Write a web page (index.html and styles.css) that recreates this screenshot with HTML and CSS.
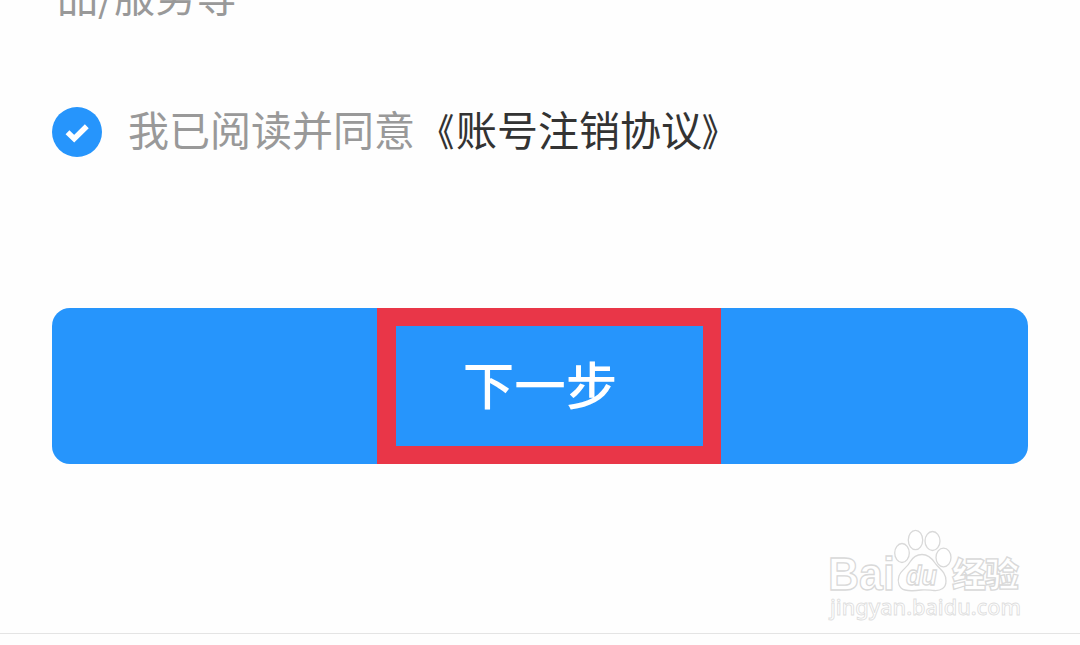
FILE: index.html
```
<!DOCTYPE html>
<html lang="zh-CN">
<head>
  <meta charset="UTF-8" />
  <meta name="viewport" content="width=device-width, initial-scale=1.0"/>
  <title>账号注销</title>
  <link rel="stylesheet" href="styles.css">
</head>
<body>
  <main class="page">
    <p class="terms">品/服务等</p>

    <div class="agree">
      <svg class="check" viewBox="0 0 50 50">
        <circle cx="25" cy="25" r="25"/>
        <path d="M15.500 25.200 L22.200 31.700 L34.800 19.200"/>
      </svg>
      <p class="agree-text">我已阅读并同意<a class="link"><span class="open">《</span>账号注销协议<span class="close">》</span></a></p>
    </div>

    <button class="next" type="button">下一步<span class="highlight"></span></button>

    <footer class="footer">
      <svg class="watermark" viewBox="0 0 220 110">
        <g class="outline">
          <text class="latin" x="13" y="69.500" textLength="67" lengthAdjust="spacingAndGlyphs">Bai</text>
          <ellipse cx="87" cy="33" rx="7.3" ry="9.5"/>
          <ellipse cx="100.500" cy="20" rx="7.2" ry="9.7"/>
          <ellipse cx="117.500" cy="21" rx="7.5" ry="9.5"/>
          <ellipse cx="128.500" cy="37.500" rx="7.5" ry="9.3"/>
          <path d="M107 34.500 C113 34.500 117 38.500 120 43 C123 48 131 51 131 61 C131 68 126 71 119 70.500 C113 70 110 69.500 106 70 C99 71 94 71 90 70 C84 68.500 82 62 84 56 C86 50 92 48 95 42 C98 37 102 34.500 107 34.500Z"/>
          <text class="du" x="91" y="65" textLength="31" lengthAdjust="spacingAndGlyphs">du</text>
          <text class="cjk" x="137" y="67" textLength="67">经验</text>
          <text class="domain" x="15" y="95" textLength="191" lengthAdjust="spacingAndGlyphs">jingyan.baidu.com</text>
        </g>
      </svg>
    </footer>
  </main>
</body>
</html>
```

FILE: styles.css
```
body {
  margin: 0;
  background: #fefefe;
  font-family: "Noto Sans CJK SC", sans-serif;
  color: #333;
}
.page {
  display: flex;
  flex-direction: column;
  height: 645px;
  overflow: hidden;
}
p {
  margin: 0;
}
.terms {
  height: 143px;
  margin-top: -36px;
  margin-left: 57px;
  font-size: 41px;
  line-height: 60px;
  color: #999;
}
.agree {
  display: flex;
  align-items: center;
  height: 50px;
  padding: 0 52px;
  gap: 26px;
}
.check {
  width: 50px;
  height: 50px;
  fill: #2695fc;
}
.check path {
  fill: none;
  stroke: #fff;
  stroke-width: 5.5;
}
.agree-text {
  padding-bottom: 6px;
  font-size: 41px;
  line-height: 50px;
  white-space: nowrap;
  color: #999;
}
.link {
  color: #333;
}
.open, .close {
  display: inline-block;
  font-size: 38px;
  font-weight: 500;
}
.open {
  margin-left: 1px;
  margin-right: 2px;
  transform: scaleX(0.85);
  transform-origin: right;
}
.close {
  transform: scaleX(0.85);
  transform-origin: left;
}
.next {
  position: relative;
  flex: none;
  height: 156px;
  margin: 151px 52px 0;
  padding: 0 0 8px 0;
  border: none;
  border-radius: 18px;
  background: #2695fc;
  color: #fff;
  font-family: inherit;
  font-size: 51.5px;
  font-weight: 500;
}
.highlight {
  position: absolute;
  top: 0;
  left: 325px;
  box-sizing: border-box;
  width: 344px;
  height: 156px;
  border: 18px solid #e93648;
  border-left-width: 19px;
}
.footer {
  display: flex;
  justify-content: flex-end;
  height: 113px;
  margin-top: 56px;
  padding-right: 45px;
  border-bottom: 1px solid #e4e4e4;
}
.watermark {
  width: 220px;
  height: 110px;
}
.outline {
  fill: #fff;
  stroke: #d9d9d9;
  stroke-width: 1.3;
}
.latin, .du {
  font-family: "Liberation Sans", sans-serif;
  font-weight: bold;
}
.latin {
  font-size: 46px;
}
.du {
  font-size: 28px;
  font-style: oblique;
}
.cjk {
  font-size: 34px;
  font-weight: 900;
}
.domain {
  font-family: "Noto Sans", sans-serif;
  font-size: 22px;
  font-weight: 500;
  stroke: #dedede;
  stroke-width: 0.9;
}
```
